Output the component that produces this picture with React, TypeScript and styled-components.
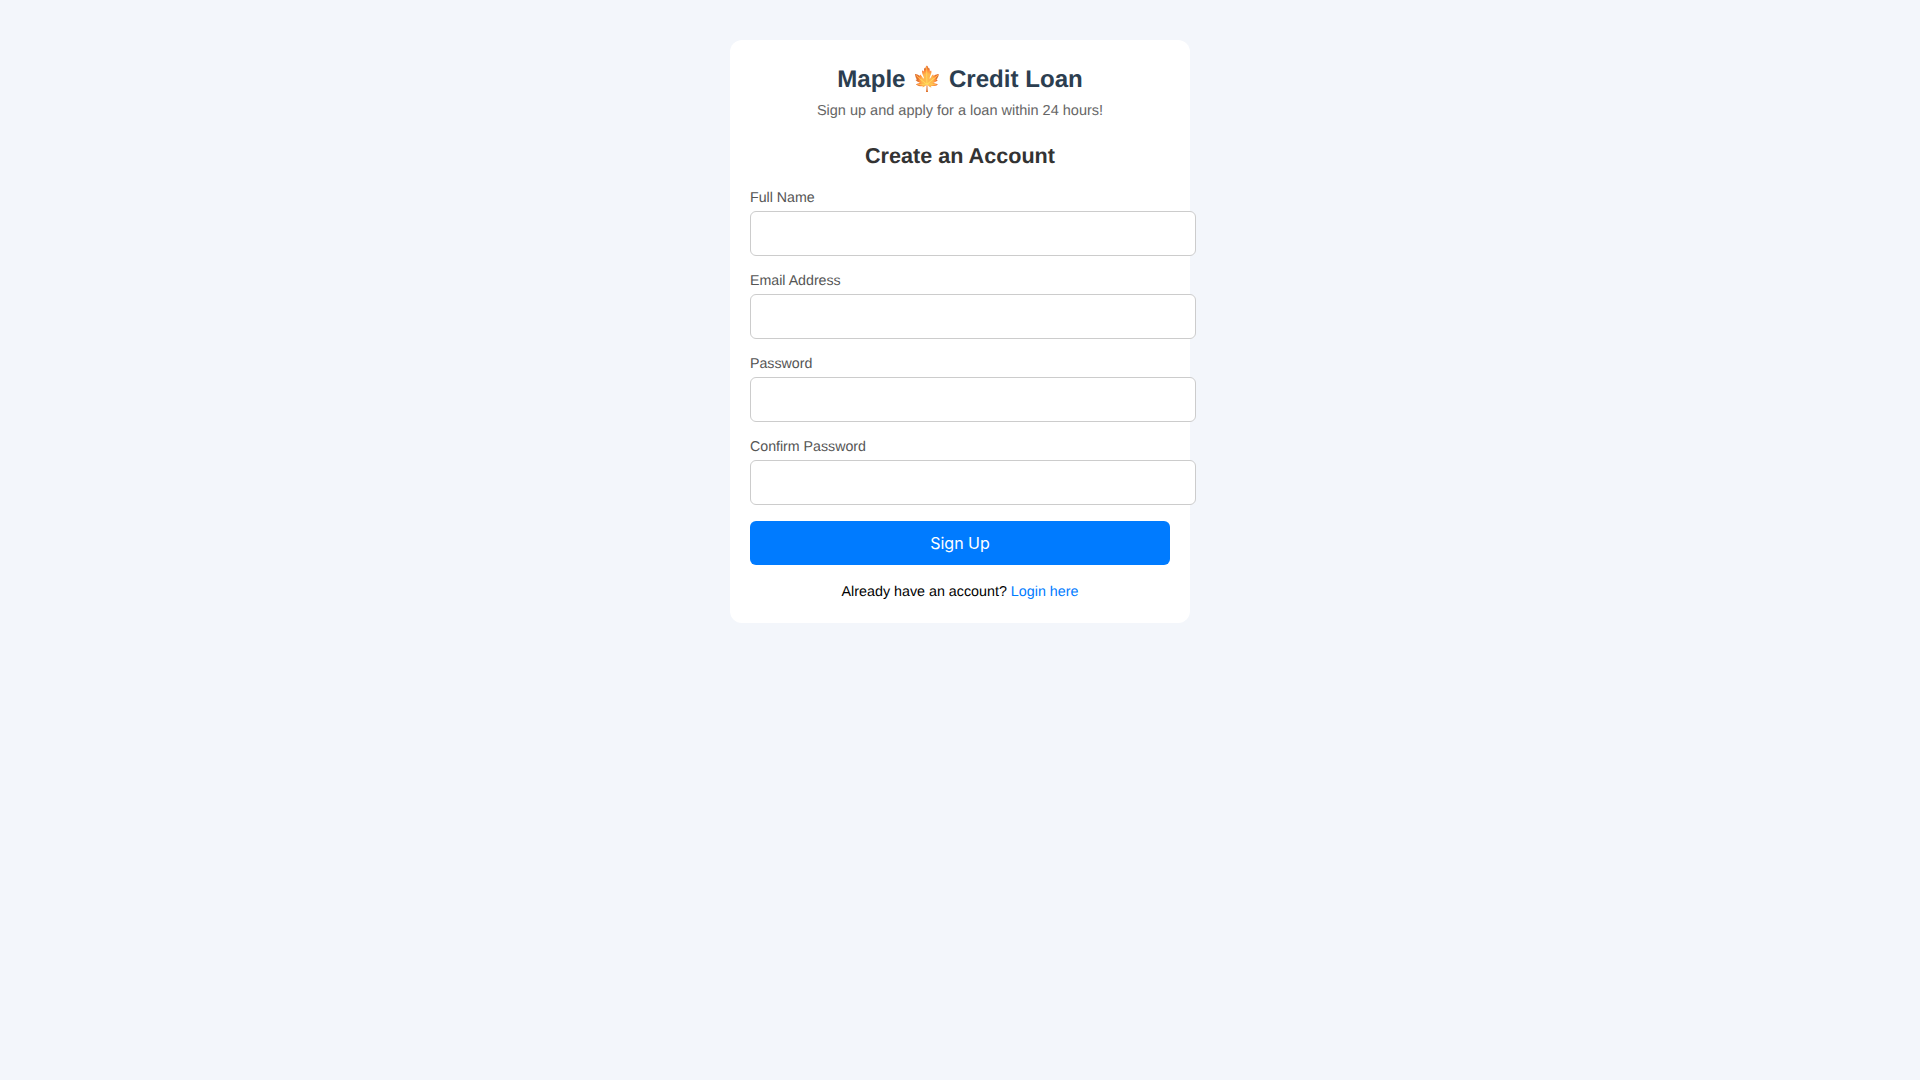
import React from "react";
import styled, { createGlobalStyle } from "styled-components";

const fields = [
  { label: "Full Name", type: "text" },
  { label: "Email Address", type: "email" },
  { label: "Password", type: "password" },
  { label: "Confirm Password", type: "password" },
];

const App: React.FC = () => {
  return (
    <>
      <GlobalStyle />
      <Page>
        <Card>
          <Brand>
            Maple <Leaf>🍁</Leaf> Credit Loan
          </Brand>
          <Tagline>Sign up and apply for a loan within 24 hours!</Tagline>
          <Heading>Create an Account</Heading>
          <Form onSubmit={(e) => e.preventDefault()}>
            {fields.map((f) => (
              <Field key={f.label}>
                <Label>{f.label}</Label>
                <Input type={f.type} />
              </Field>
            ))}
            <SubmitButton type="submit">Sign Up</SubmitButton>
          </Form>
          <FooterText>
            Already have an account? <FooterLink href="#">Login here</FooterLink>
          </FooterText>
        </Card>
      </Page>
    </>
  );
};

const GlobalStyle = createGlobalStyle`
  html, body {
    margin: 0;
    padding: 0;
    background: #f3f6fb;
    font-family: "Liberation Sans", Arial, sans-serif;
    text-rendering: geometricPrecision;
  }
`;

const Page = styled.div`
  min-height: 1080px;
  display: flex;
  justify-content: center;
  align-items: flex-start;
  padding-top: 40px;
  box-sizing: border-box;
`;

const Card = styled.div`
  width: 460px;
  box-sizing: border-box;
  padding: 20px;
  background: #fff;
  border-radius: 12px;
`;

const Brand = styled.h1`
  margin: 0;
  font-size: 24.1px;
  line-height: 40px;
  font-weight: 700;
  text-align: center;
  color: #2c3e50;
`;

const Leaf = styled.span`
  filter: sepia(1) saturate(3.6) hue-rotate(-20deg) brightness(1.38);
`;

const Tagline = styled.p`
  margin: 2px 0 0;
  font-size: 14.5px;
  line-height: 18px;
  text-align: center;
  color: #666;
`;

const Heading = styled.h2`
  margin: 23px 0 0;
  font-size: 21.6px;
  line-height: 26px;
  font-weight: 700;
  text-align: center;
  color: #333;
`;

const Form = styled.form`
  margin-top: 20px;
`;

const Field = styled.div`
  margin-bottom: 16px;
`;

const Label = styled.label`
  display: block;
  margin-bottom: 3px;
  font-size: 14.2px;
  line-height: 19px;
  color: #555;
`;

const Input = styled.input`
  display: block;
  width: 100%;
  padding: 12px;
  box-sizing: content-box;
  height: 19px;
  border: 1px solid #ccc;
  border-radius: 6px;
  font-size: 16px;
  background: #fff;
  outline: none;
`;

const SubmitButton = styled.button`
  display: block;
  width: 100%;
  height: 44px;
  border: none;
  border-radius: 6px;
  background: #007bff;
  color: #fff;
  font-family: Inter, sans-serif;
  font-size: 16px;
  cursor: pointer;
`;

const FooterText = styled.p`
  margin: 19px 0 2px;
  font-size: 14.3px;
  line-height: 17px;
  text-align: center;
  color: #000;
`;

const FooterLink = styled.a`
  color: #007bff;
  text-decoration: none;
`;

export default App;
